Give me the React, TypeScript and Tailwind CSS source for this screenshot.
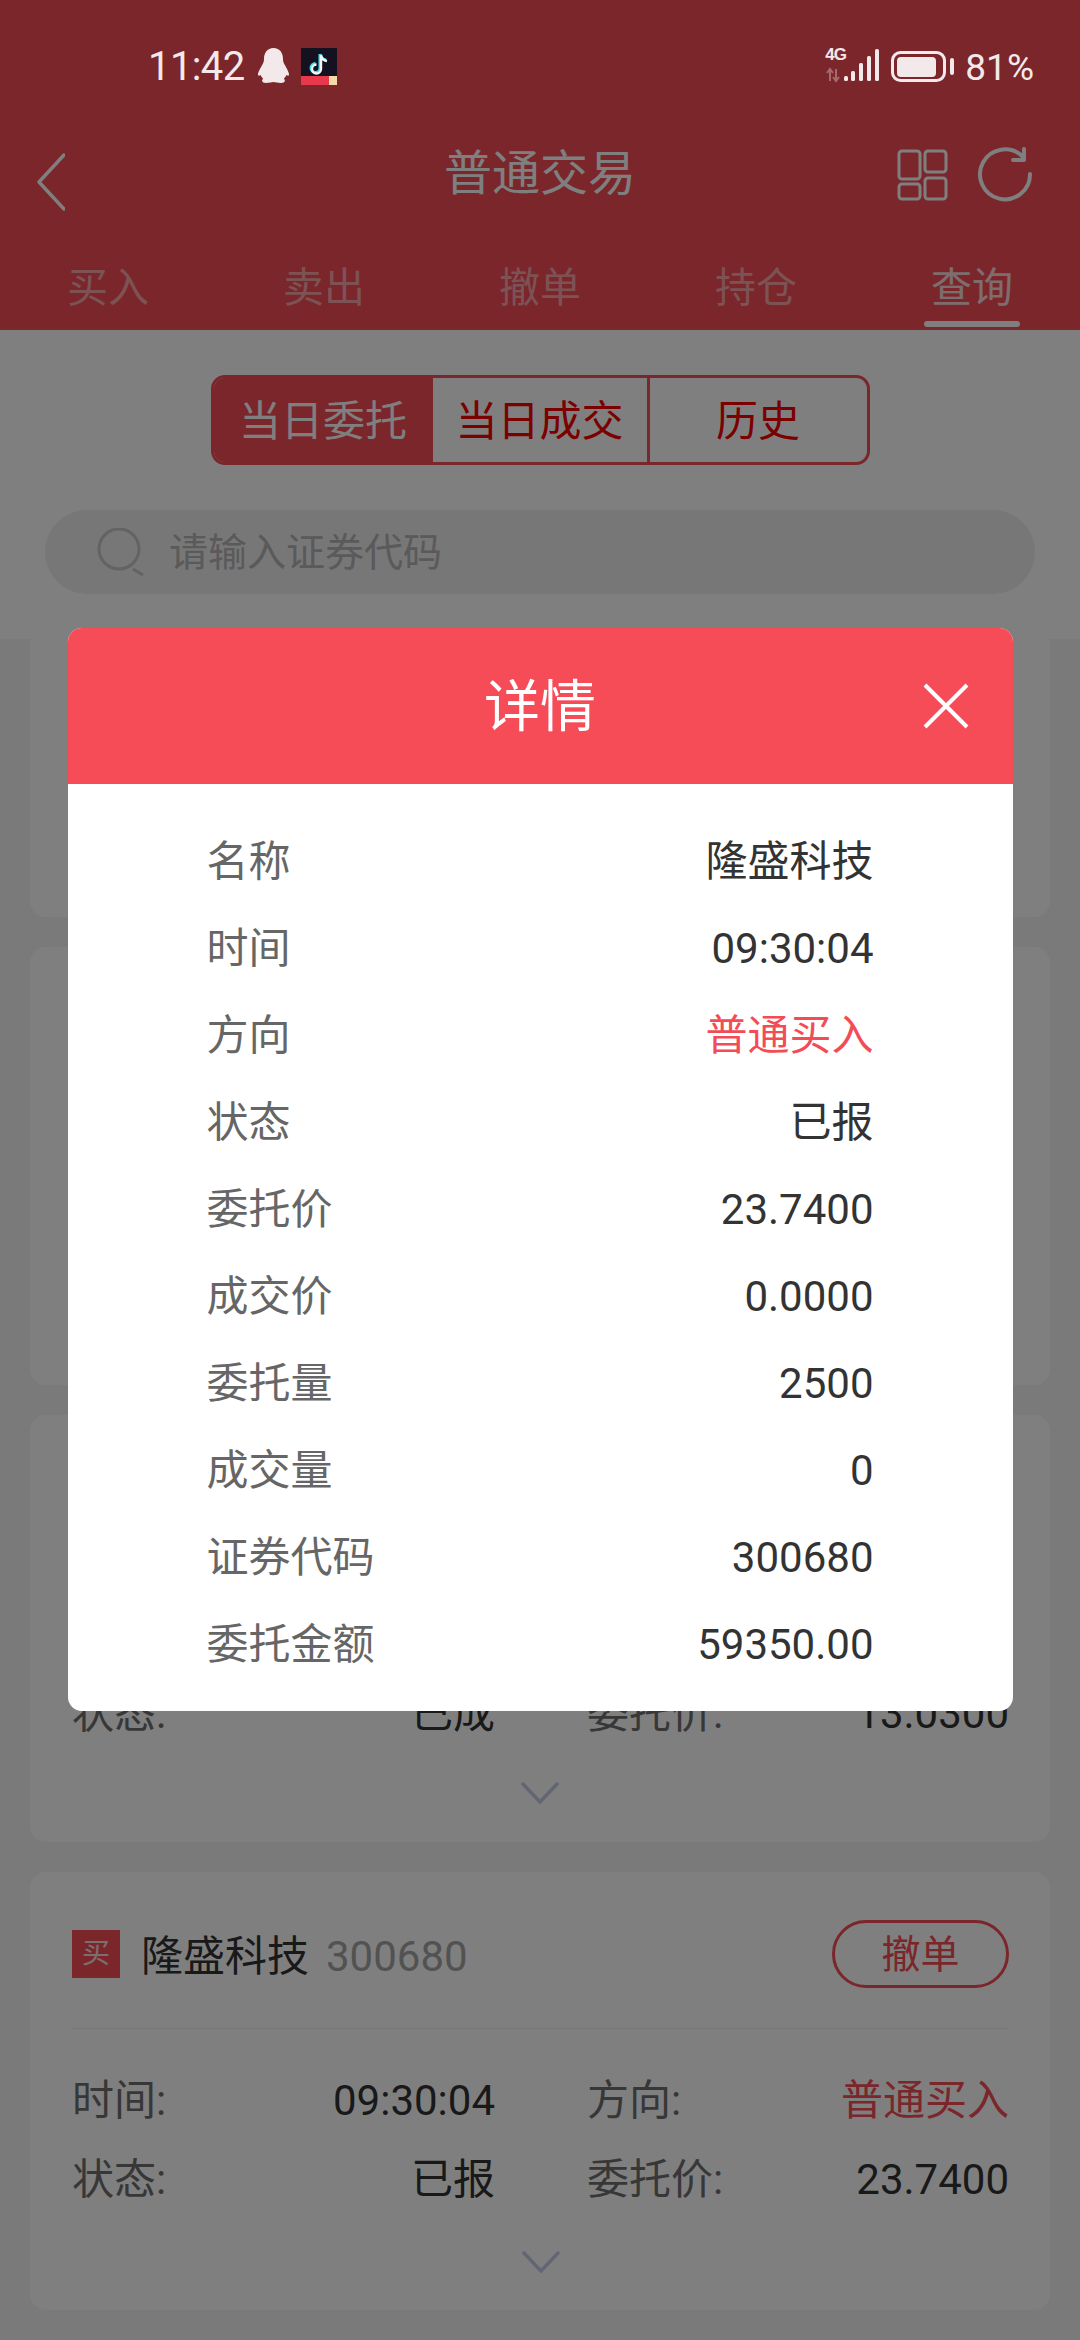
const FONT = "font-['Roboto','Noto_Sans_CJK_SC',sans-serif]";

const DETAILS: { label: string; value: string; red?: boolean }[] = [
  { label: "名称", value: "隆盛科技" },
  { label: "时间", value: "09:30:04" },
  { label: "方向", value: "普通买入", red: true },
  { label: "状态", value: "已报" },
  { label: "委托价", value: "23.7400" },
  { label: "成交价", value: "0.0000" },
  { label: "委托量", value: "2500" },
  { label: "成交量", value: "0" },
  { label: "证券代码", value: "300680" },
  { label: "委托金额", value: "59350.00" },
];

function StatusBar() {
  return (
    <div className="relative z-20 flex h-[132px] items-start pl-[148px] pr-[46px] pt-[48px] text-[#f3e9ea]">
      <span className="mt-[-4px] font-['Roboto',sans-serif] text-[40px] font-normal leading-[46px] tracking-[-0.6px]">11:42</span>
      <svg className="ml-[13px]" width="31" height="36" viewBox="0 0 31 36">
        <path
          fill="#f3e9ea"
          d="M15.5 0C9 0 6 5 6 11c0 2-.4 3.500-1.500 5.500C2.500 20 0 24 0 26.500c0 1.500 1 1.500 2.500 .5 .7 1.500 1.500 2.800 2.700 3.800C3.500 32 3.500 35 8 35c3.500 0 5.500-1 7.500-1s4 1 7.500 1c4.500 0 4.500-3 2.800-4.200 1.200-1 2-2.300 2.700-3.800 1.500 1 2.500 1 2.500-.5 0-2.500-2.500-6.500-4.500-10C25.400 14.500 25 13 25 11 25 5 22 0 15.500 0z"
        />
      </svg>
      <svg className="ml-[12px]" width="36" height="37" viewBox="0 0 36 37">
        <rect width="36" height="37" fill="#141220" />
        <rect y="28" width="36" height="9" fill="#e8394c" />
        <rect x="28" y="28" width="8" height="9" fill="#f5d9a8" />
        <path d="M19 6v14a4.500 4.500 0 1 1-4.500-4.500M19 6c.5 3.500 2.500 5.500 6 6" fill="none" stroke="#37dfe6" strokeWidth="3" />
        <path d="M20 7v14a4.500 4.500 0 1 1-4.500-4.500M20 7c.5 3.500 2.500 5.500 6 6" fill="none" stroke="#f6f6f6" strokeWidth="2.400" />
      </svg>
      <div className="relative ml-auto h-[36px] w-[55px]">
        <span className="absolute left-0 top-[-1px] font-['Liberation_Sans',sans-serif] text-[17px] font-bold leading-[16px] tracking-[-1px]">4G</span>
        <svg className="absolute left-0 top-0" width="55" height="36" viewBox="0 0 55 36">
          <path d="M5 21v12M2 25l3-4 3 4M11 21v12M8 29l3 4 3-4" fill="none" stroke="#a8696d" strokeWidth="2" />
          <rect x="19" y="28" width="4" height="5" rx="1.500" fill="#f3e9ea" />
          <rect x="26" y="23" width="4" height="10" rx="1.500" fill="#f3e9ea" />
          <rect x="34" y="15" width="4" height="18" rx="1.500" fill="#f3e9ea" />
          <rect x="42" y="8" width="4" height="25" rx="1.500" fill="#f3e9ea" />
          <rect x="50" y="1" width="4" height="32" rx="1.500" fill="#f3e9ea" />
        </svg>
      </div>
      <svg className="ml-[11px] mt-[3px]" width="63" height="32" viewBox="0 0 63 32">
        <rect x="1.500" y="1.500" width="52" height="28" rx="8" fill="none" stroke="#f3e9ea" strokeWidth="3" />
        <rect x="6" y="6" width="39" height="20" rx="4" fill="#f3e9ea" />
        <rect x="59" y="7" width="4" height="17" rx="2" fill="#f3e9ea" />
      </svg>
      <span className="ml-[11px] mt-[-2px] font-['Roboto',sans-serif] text-[37px] leading-[44px]">81%</span>
    </div>
  );
}

function NavBar() {
  return (
    <div className="relative flex h-[80px] items-center justify-center">
      <svg className="absolute left-[37px] top-[21px]" width="28" height="58" viewBox="0 0 28 58" fill="none" stroke="#ffffff" strokeWidth="3.500" strokeLinecap="round" strokeLinejoin="round">
        <path d="M27 2 2 29l25 27" />
      </svg>
      <h1 className="mt-[3px] text-[48px] leading-[60px] text-white">普通交易</h1>
      <svg className="absolute left-[896px] top-[14px]" width="140" height="58" viewBox="0 0 140 58" fill="none" stroke="#ffffff">
        <g strokeWidth="3">
          <rect x="3" y="5" width="21" height="28" rx="3" />
          <rect x="29" y="5" width="21" height="21" rx="3" />
          <rect x="3" y="38" width="21" height="15" rx="3" />
          <rect x="29" y="32" width="21" height="21" rx="3" />
        </g>
        <g strokeWidth="4" strokeLinecap="round" strokeLinejoin="round">
          <path d="M134 28a25 25 0 1 1-8-18" />
          <path d="M128 3v11h-11" />
        </g>
      </svg>
    </div>
  );
}

function Tabs() {
  const tabs = ["买入", "卖出", "撤单", "持仓", "查询"];
  return (
    <div className="grid h-[118px] grid-cols-5">
      {tabs.map((t, i) => (
        <div key={t} className="relative flex h-[118px] justify-center">
          <span className={`mt-[50px] text-[41px] leading-[52px] ${i === 4 ? "text-[#ffffff]/80" : "text-white/50"}`}>{t}</span>
          {i === 4 && <span className="absolute bottom-[3px] h-[6px] w-[96px] rounded-full bg-white" />}
        </div>
      ))}
    </div>
  );
}

function Segments() {
  return (
    <div className="flex justify-center pt-[45px]">
      <div className="flex h-[90px] w-[659px] overflow-hidden rounded-[14px] border-[3px] border-[#f44c56] text-[42px] text-[#f60000]">
        <div className="flex w-[219px] items-center justify-center bg-[#f44c56] pt-[3px] text-white">当日委托</div>
        <div className="flex w-[217px] items-center justify-center border-r-[3px] border-[#f44c56] pt-[3px]">当日成交</div>
        <div className="flex flex-1 items-center justify-center pt-[3px]">历史</div>
      </div>
    </div>
  );
}

function SearchBox() {
  return (
    <div className="px-[45px] pt-[45px]">
      <div className="flex h-[84px] items-center rounded-full bg-[#eeeeee] pl-[51px]">
        <svg width="50" height="48" viewBox="0 0 50 48" fill="none" stroke="#c6c6c6" strokeWidth="3">
          <circle cx="23" cy="21" r="20" />
          <path d="M37 41l10 6" />
        </svg>
        <span className="ml-[23px] mt-[3px] text-[39px] leading-none text-[#b4b4b4]">请输入证券代码</span>
      </div>
    </div>
  );
}

function Field({ label, value, valueClass }: { label: string; value: string; valueClass?: string }) {
  return (
    <div className="flex items-center justify-between">
      <span className="text-[#6f6f6f]">{label}</span>
      <span className={valueClass ?? "text-[#333333]"}>{value}</span>
    </div>
  );
}

function Chevron() {
  return (
    <svg className="mx-auto" width="38" height="22" viewBox="0 0 38 22" fill="none" stroke="#c4cde6" strokeWidth="3.500" strokeLinecap="round">
      <path d="M2 2l17 18L36 2" />
    </svg>
  );
}

function OrderRows({ rows }: { rows: [string, string, string, string, string?][] }) {
  return (
    <div className="text-[42px]">
      {rows.map((r) => (
        <div key={r[0]} className="grid h-[79px] grid-cols-[423px_422px] content-center gap-x-[92px]">
          <Field label={r[0]} value={r[1]} />
          <Field label={r[2]} value={r[3]} valueClass={r[4]} />
        </div>
      ))}
    </div>
  );
}

function DetailModal() {
  return (
    <div className="absolute inset-0 z-10 flex items-start justify-center bg-black/50 pt-[628px]">
      <div className="w-[945px] overflow-hidden rounded-[14px] bg-white">
        <div className="relative flex h-[156px] items-center justify-center bg-[#f54c58]">
          <span className="mt-[2px] text-[56px] leading-none text-white">详情</span>
          <svg className="absolute left-[855px] top-[55px]" width="46" height="46" viewBox="0 0 46 46" fill="none" stroke="#ffffff" strokeWidth="4">
            <path d="M2 2l42 42M44 2 2 44" />
          </svg>
        </div>
        <div className="px-[139px] pb-[23px] pt-[34px] text-[42px]">
          {DETAILS.map((d) => (
            <div key={d.label} className="flex h-[87px] items-center justify-between">
              <span className="text-[#666666]">{d.label}</span>
              <span className={d.red ? "text-[#f44c56]" : "text-[#333333]"}>{d.value}</span>
            </div>
          ))}
        </div>
      </div>
    </div>
  );
}

export default function App() {
  return (
    <div className={`relative h-[2340px] w-[1080px] overflow-hidden bg-[#f5f5f5] ${FONT}`}>
      <header className="h-[330px] bg-[#f44c56]">
        <StatusBar />
        <NavBar />
        <Tabs />
      </header>

      <section className="h-[309px] bg-white">
        <Segments />
        <SearchBox />
      </section>

      <main className="flex flex-col gap-[30px] px-[30px]">
        <div className="h-[278px] rounded-b-[16px] bg-white" />
        <div className="h-[438px] rounded-[16px] bg-white" />

        <div className="flex h-[427px] flex-col justify-end rounded-[16px] bg-white px-[42px] pb-[38px]">
          <OrderRows rows={[["状态:", "已成", "委托价:", "13.0300"]]} />
          <div className="pt-[29px]">
            <Chevron />
          </div>
        </div>

        <div className="h-[438px] rounded-[16px] bg-white pl-[42px] pr-[41px] pt-[48px]">
          <div className="flex h-[68px] items-center">
            <span className="flex h-[48px] w-[48px] items-center justify-center bg-[#f44c56] text-[28px] leading-none text-white/80">买</span>
            <span className="ml-[21px] mt-[5px] text-[42px] text-[#333333]">隆盛科技</span>
            <span className="ml-[17px] mt-[5px] text-[42px] text-[#a4a4a4]">300680</span>
            <button className="ml-auto flex h-[68px] w-[177px] items-center justify-center rounded-full border-[3px] border-[#f44c56] pt-[3px] text-[39px] text-[#f44c56]">撤单</button>
          </div>
          <div className="mt-[40px] h-[1px] bg-[#eeeeee]" />
          <div className="pt-[32px]">
            <OrderRows
              rows={[
                ["时间:", "09:30:04", "方向:", "普通买入", "text-[#f44c56]"],
                ["状态:", "已报", "委托价:", "23.7400"],
              ]}
            />
          </div>
          <div className="pt-[32px]">
            <Chevron />
          </div>
        </div>
      </main>

      <DetailModal />
    </div>
  );
}
